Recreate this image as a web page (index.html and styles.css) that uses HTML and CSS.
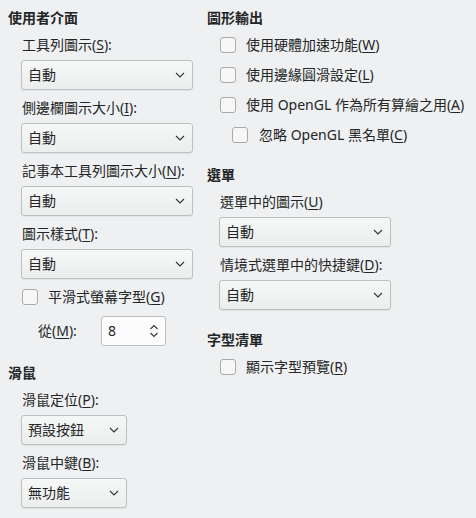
FILE: index.html
```html
<!DOCTYPE html>
<html lang="zh-Hant">
<head>
<meta charset="utf-8">
<link rel="stylesheet" href="styles.css">
</head>
<body>
<div class="page">
  <div class="col left">
    <div class="heading">使用者介面</div>
    <div class="group">
      <div class="label">工具列圖示(<u>S</u>):</div>
      <div class="combo wide"><span>自動</span><svg class="chev" viewBox="0 0 10 6"><path d="M1 1 L5 5 L9 1"/></svg></div>
      <div class="label l2">側邊欄圖示大小(<u>I</u>):</div>
      <div class="combo wide"><span>自動</span><svg class="chev" viewBox="0 0 10 6"><path d="M1 1 L5 5 L9 1"/></svg></div>
      <div class="label l2">記事本工具列圖示大小(<u>N</u>):</div>
      <div class="combo wide"><span>自動</span><svg class="chev" viewBox="0 0 10 6"><path d="M1 1 L5 5 L9 1"/></svg></div>
      <div class="label l2">圖示樣式(<u>T</u>):</div>
      <div class="combo wide"><span>自動</span><svg class="chev" viewBox="0 0 10 6"><path d="M1 1 L5 5 L9 1"/></svg></div>
      <div class="check cb-smooth"><span class="box"></span><span>平滑式螢幕字型(<u>G</u>)</span></div>
      <div class="spinrow">
        <span class="spinlabel">從(<u>M</u>):</span>
        <div class="spin"><span>8</span>
          <svg class="arrows" viewBox="0 0 10 16"><path d="M1.5 6 L5 2.5 L8.5 6"/><path d="M1.5 10 L5 13.5 L8.5 10"/></svg>
        </div>
      </div>
    </div>
    <div class="heading h-mouse">滑鼠</div>
    <div class="group">
      <div class="label">滑鼠定位(<u>P</u>):</div>
      <div class="combo narrow"><span>預設按鈕</span><svg class="chev" viewBox="0 0 10 6"><path d="M1 1 L5 5 L9 1"/></svg></div>
      <div class="label l2">滑鼠中鍵(<u>B</u>):</div>
      <div class="combo narrow"><span>無功能</span><svg class="chev" viewBox="0 0 10 6"><path d="M1 1 L5 5 L9 1"/></svg></div>
    </div>
  </div>
  <div class="col right">
    <div class="heading">圖形輸出</div>
    <div class="rgroup checks">
      <div class="check"><span class="box"></span><span>使用硬體加速功能(<u>W</u>)</span></div>
      <div class="check"><span class="box"></span><span>使用邊緣圓滑設定(<u>L</u>)</span></div>
      <div class="check"><span class="box"></span><span>使用 OpenGL 作為所有算繪之用(<u>A</u>)</span></div>
      <div class="check sub"><span class="box"></span><span>忽略 OpenGL 黑名單(<u>C</u>)</span></div>
    </div>
    <div class="heading h-menu">選單</div>
    <div class="rgroup">
      <div class="label">選單中的圖示(<u>U</u>)</div>
      <div class="combo wide"><span>自動</span><svg class="chev" viewBox="0 0 10 6"><path d="M1 1 L5 5 L9 1"/></svg></div>
      <div class="label l2">情境式選單中的快捷鍵(<u>D</u>):</div>
      <div class="combo wide"><span>自動</span><svg class="chev" viewBox="0 0 10 6"><path d="M1 1 L5 5 L9 1"/></svg></div>
    </div>
    <div class="heading h-font">字型清單</div>
    <div class="rgroup">
      <div class="check cb-font"><span class="box"></span><span>顯示字型預覽(<u>R</u>)</span></div>
    </div>
  </div>
</div>
</body>
</html>
```

FILE: styles.css
```css
html, body {
  margin: 0;
  padding: 0;
  background: #eff0f1;
}
body {
  width: 476px;
  height: 518px;
  overflow: hidden;
  font-family: "Noto Sans", "Noto Sans CJK TC", sans-serif;
  font-size: 14px;
  line-height: 20px;
  color: #232627;
}
u {
  text-decoration: underline;
  text-underline-offset: 2px;
}
.page {
  display: grid;
  grid-template-columns: 199px 1fr;
  padding: 8px 0 0 8px;
}
.col {
  display: flex;
  flex-direction: column;
}
.heading {
  font-weight: bold;
  height: 20px;
}
.group {
  display: flex;
  flex-direction: column;
  align-items: flex-start;
  padding-left: 13px;
  margin-top: 7px;
}
.label {
  height: 20px;
  padding-left: 1px;
  white-space: nowrap;
}
.label.l2 {
  margin-top: 8px;
}
.combo {
  box-sizing: border-box;
  height: 30px;
  margin-top: 5px;
  border: 1px solid #bdbfc1;
  border-radius: 3px;
  background: linear-gradient(#f6f7f7, #eceded);
  box-shadow: 0 1px 1px rgba(0,0,0,0.06);
  display: flex;
  align-items: center;
  justify-content: space-between;
  padding: 0 7px 0 6px;
}
.combo.wide { width: 172px; }
.combo.narrow { width: 106px; }
.chev {
  width: 10px;
  height: 6px;
  fill: none;
  stroke: #31363b;
  stroke-width: 1.1;
}
.check {
  display: flex;
  align-items: center;
  height: 20px;
  white-space: nowrap;
}
.box {
  box-sizing: border-box;
  width: 16px;
  height: 16px;
  border: 1px solid #a9abad;
  border-radius: 3px;
  background: #f7f7f8;
  margin-right: 10px;
  flex: none;
}
.cb-smooth {
  margin-top: 8px;
  padding-left: 1px;
}
.spinrow {
  display: flex;
  align-items: center;
  margin-top: 9px;
  height: 30px;
}
.spinlabel {
  padding-left: 17px;
  width: 80px;
  box-sizing: border-box;
}
.spin {
  box-sizing: border-box;
  width: 65px;
  height: 30px;
  background: #fcfcfc;
  border: 1px solid #bdbfc1;
  border-radius: 3px;
  display: flex;
  align-items: center;
  justify-content: space-between;
  padding: 0 6px 0 6px;
}
.arrows {
  width: 10px;
  height: 16px;
  fill: none;
  stroke: #31363b;
  stroke-width: 1.1;
}
.h-mouse { margin-top: 17px; }
.rgroup {
  display: flex;
  flex-direction: column;
  align-items: flex-start;
  padding-left: 12px;
  margin-top: 7px;
}
.checks {
  gap: 10px;
  padding-left: 13px;
}
.check.sub {
  padding-left: 12px;
}
.check.sub .box { margin-right: 11px; }
.h-menu { margin-top: 20px; }
.h-font { margin-top: 20px; }
.cb-font { margin-left: 1px; }
```
